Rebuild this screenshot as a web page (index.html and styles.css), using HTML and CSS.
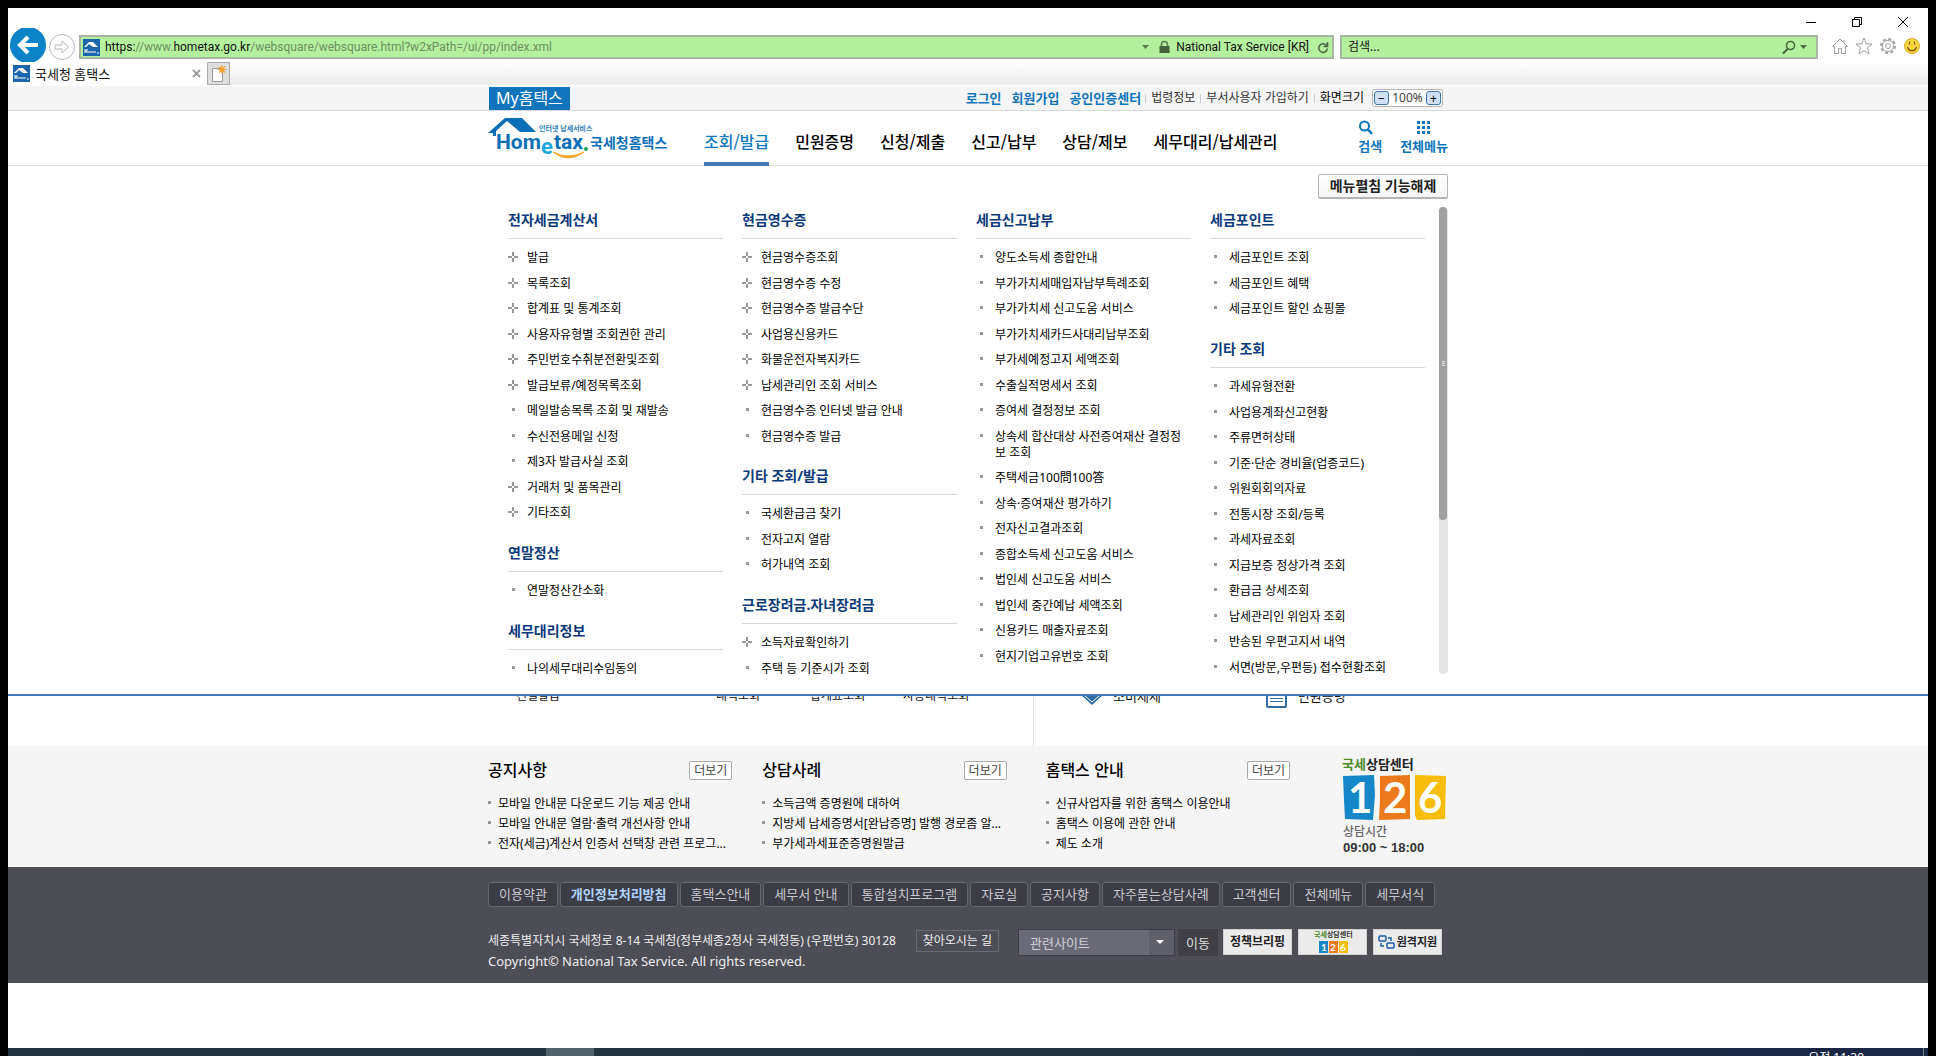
FILE: index.html
```html
<!DOCTYPE html>
<html lang="ko">
<head>
<meta charset="utf-8">
<title>국세청 홈택스</title>
<link rel="stylesheet" href="styles.css">
</head>
<body>
<div class="window">
  <div class="chrome">
    <div class="titlebar">
      <button class="winbtn" aria-label="최소화"><svg width="12" height="12" viewBox="0 0 12 12"><path d="M1 6.500H11" stroke="#000" fill="none"/></svg></button>
      <button class="winbtn" aria-label="이전 크기로"><svg width="12" height="12" viewBox="0 0 12 12"><path d="M1.500 3.500H8.500V10.500H1.500ZM3.500 3.500V1.500H10.500V8.500H8.500" stroke="#000" fill="none"/></svg></button>
      <button class="winbtn" aria-label="닫기"><svg width="12" height="12" viewBox="0 0 12 12"><path d="M1 1L11 11M11 1L1 11" stroke="#000" fill="none"/></svg></button>
    </div>
    <div class="addressrow">
      <button class="back" aria-label="뒤로"><svg width="38" height="36" viewBox="0 0 38 36"><circle cx="19" cy="18" r="18" fill="#0a84c6"/><path d="M29 18H12M19 10L11 18L19 26" fill="none" stroke="#fff" stroke-width="4"/></svg></button>
      <button class="forward" aria-label="앞으로"><svg width="28" height="28" viewBox="0 0 28 28"><circle cx="14" cy="14" r="12.500" fill="#fff" stroke="#b9b9b9"/><path d="M7 12H14V8L20.500 14L14 20V16H7Z" fill="none" stroke="#b5b5b5"/></svg></button>
      <div class="url">
        <svg class="favicon" width="17" height="17" viewBox="0 0 17 17"><rect width="17" height="17" fill="#1a65ab"/><path d="M1 8L6 3H10L15 8H10L6 5L3 8Z" fill="#fff"/><path d="M2 10V14M4 10V14M2 12H4M6 12V14M8 12V14M10 12V14M12 12V14M14 14H16" stroke="#fff" fill="none"/></svg>
        <p class="urltext"><b>https:</b>//www.<b>hometax.go.kr</b>/websquare/websquare.html?w2xPath=/ui/pp/index.xml</p>
        <svg width="7" height="4" viewBox="0 0 7 4"><path d="M0 0H7L3.500 4Z" fill="#5c7d52"/></svg>
        <svg class="lock" width="11" height="12" viewBox="0 0 11 12"><path d="M2.500 6V3.500A3 3 0 0 1 8.500 3.500V6" stroke="#5b7a50" stroke-width="1.500" fill="none"/><rect x="0.500" y="5" width="10" height="7" fill="#456339"/></svg>
        <span class="cert">National Tax Service [KR]</span>
        <svg width="12" height="13" viewBox="0 0 12 13"><path d="M9.500 4.500A4.300 4.300 0 1 0 10.300 7.500M10.500 1V5.500H6.500" stroke="#4f6b45" stroke-width="1.600" fill="none"/></svg>
      </div>
      <div class="finder">
        <input class="findinput" type="text" value="검색..." aria-label="검색">
        <svg width="14" height="15" viewBox="0 0 14 15"><circle cx="8.500" cy="5.500" r="4" stroke="#4a6b40" stroke-width="1.600" fill="none"/><path d="M6 8.500L1 13.500" stroke="#4a6b40" stroke-width="2.200"/></svg>
        <svg width="7" height="4" viewBox="0 0 7 4"><path d="M0 0H7L3.500 4Z" fill="#4f6b45"/></svg>
      </div>
      <div class="tools">
        <svg width="18" height="18" viewBox="0 0 18 18"><path d="M1.500 9.500L9 2L16.500 9.500H14.500V16.500H10.500V11.500H7.500V16.500H3.500V9.500ZM13 5.500V3" fill="none" stroke="#a0a0a0"/></svg>
        <svg width="18" height="18" viewBox="0 0 18 18"><path d="M9 1L11.200 6.800L17 7L12.500 10.800L14 17L9 13.500L4 17L5.500 10.800L1 7L6.800 6.800Z" fill="none" stroke="#a0a0a0"/></svg>
        <svg width="18" height="18" viewBox="0 0 18 18"><circle cx="9" cy="9" r="7" fill="none" stroke="#a0a0a0" stroke-width="2" stroke-dasharray="3 2.500"/><circle cx="9" cy="9" r="5.500" fill="#fff" stroke="#a0a0a0"/><circle cx="9" cy="9" r="2.500" fill="none" stroke="#a0a0a0"/></svg>
        <svg width="18" height="18" viewBox="0 0 18 18"><circle cx="9" cy="9" r="7.500" fill="#fcd73c" stroke="#d5ae2e"/><path d="M6.500 4.500V7.500M11.500 4.500V7.500M4.500 10A4.600 4.600 0 0 0 13.500 10" stroke="#7c5a10" stroke-width="1.300" fill="none"/></svg>
      </div>
    </div>
    <div class="tabrow">
      <div class="tab">
        <svg class="favicon" width="17" height="17" viewBox="0 0 17 17"><rect width="17" height="17" fill="#1a65ab"/><path d="M1 8L6 3H10L15 8H10L6 5L3 8Z" fill="#fff"/><path d="M2 10V14M4 10V14M2 12H4M6 12V14M8 12V14M10 12V14M12 12V14M14 14H16" stroke="#fff" fill="none"/></svg>
        <span class="tabname">국세청 홈택스</span>
        <svg width="9" height="9" viewBox="0 0 9 9"><path d="M1 1L8 8M8 1L1 8" stroke="#999" stroke-width="1.800"/></svg>
      </div>
      <button class="newtab" aria-label="새 탭"><svg width="18" height="18" viewBox="0 0 18 18"><path d="M3.500 3.500H13.500V16.500H3.500Z" fill="#fff" stroke="#999"/><path d="M13 0V9M8.500 4.500H17.500M10 1.500L16 7.500M16 1.500L10 7.500" stroke="#f2a02d" stroke-width="1.200"/></svg></button>
    </div>
  </div>

  <div class="utilbar">
    <div class="wrap utilrow">
      <a class="my" href="#">My홈택스</a>
      <div class="utils">
        <a class="strong" href="#">로그인</a>
        <a class="strong" href="#">회원가입</a>
        <a class="strong" href="#">공인인증센터</a>
        <a class="plain" href="#">법령정보</a>
        <a class="plain" href="#">부서사용자 가입하기</a>
        <span class="plain dark">화면크기</span>
        <div class="zoomer">
          <button class="zbtn" aria-label="축소">−</button><span>100%</span><button class="zbtn" aria-label="확대">+</button>
        </div>
      </div>
    </div>
  </div>

  <header class="header">
    <div class="wrap headrow">
      <a class="logo" href="#" aria-label="Hometax 국세청홈택스">
        <svg width="182" height="44" viewBox="0 0 182 44">
          <path d="M0 16L17 1H34L48 15H32L19 4L8 14V19H5V16Z" fill="#0b6fb8"/>
          <text x="8" y="32" class="lg-main">Hom</text>
          <text x="53" y="37" class="lg-e">e</text>
          <text x="66" y="32" class="lg-main">tax</text>
          <circle cx="98" cy="32" r="2" fill="#18a558"/>
          <path d="M65 35Q80 47 96 35Q80 43 65 35Z" fill="#f6a623" stroke="#f6a623"/>
          <text x="51" y="14" class="lg-small">인터넷 납세서비스</text>
          <text x="102" y="31" class="lg-name">국세청홈택스</text>
        </svg>
      </a>
      <nav class="gnb">
        <a class="on" href="#">조회/발급</a>
        <a href="#">민원증명</a>
        <a href="#">신청/제출</a>
        <a href="#">신고/납부</a>
        <a href="#">상담/제보</a>
        <a href="#">세무대리/납세관리</a>
      </nav>
      <div class="quick">
        <a href="#"><svg width="16" height="16" viewBox="0 0 16 16"><circle cx="6.500" cy="6" r="4.500" fill="none" stroke="#0f75bc" stroke-width="2"/><path d="M10 9.500L14 14" stroke="#0f75bc" stroke-width="2.500"/></svg>검색</a>
        <a href="#"><svg width="16" height="16" viewBox="0 0 16 16"><path d="M1 1h3v3h-3zM6 1h3v3h-3zM11 1h3v3h-3zM1 6h3v3h-3zM6 6h3v3h-3zM11 6h3v3h-3zM1 11h3v3h-3zM6 11h3v3h-3zM11 11h3v3h-3z" fill="#0f75bc"/></svg>전체메뉴</a>
      </div>
    </div>
  </header>

  <main class="main">
    <div class="wrap services">
      <div class="svc-left"><a href="#">건별발급</a><a href="#">내역조회</a><a href="#">합계표조회</a><a href="#">사용내역조회</a></div>
      <div class="svc-right">
        <a href="#"><svg width="24" height="24" viewBox="0 0 24 24"><path d="M1 11L12 21L23 11L18 4H6Z" fill="#2f6da3"/><path d="M5 12L12 18L19 12" stroke="#fff" fill="none"/></svg>소비제세</a>
        <a href="#"><svg width="24" height="24" viewBox="0 0 24 24"><rect x="2" y="1" width="19" height="22" rx="1" fill="#fff" stroke="#2f6da3" stroke-width="2"/><path d="M5 11.500H18M5 14.500H18M5 17.500H18" stroke="#2f6da3"/></svg>민원증명</a>
      </div>
    </div>

    <div class="mega">
      <div class="wrap">
        <div class="megatop"><button class="fold">메뉴펼침 기능해제</button></div>
        <div class="megabody">
          <div class="cols">
            <div class="col">
              <section><h2>전자세금계산서</h2>
                <ul class="menu">
                  <li class="more"><a href="#">발급</a></li>
                  <li class="more"><a href="#">목록조회</a></li>
                  <li class="more"><a href="#">합계표 및 통계조회</a></li>
                  <li class="more"><a href="#">사용자유형별 조회권한 관리</a></li>
                  <li class="more"><a href="#">주민번호수취분전환및조회</a></li>
                  <li class="more"><a href="#">발급보류/예정목록조회</a></li>
                  <li><a href="#">메일발송목록 조회 및 재발송</a></li>
                  <li><a href="#">수신전용메일 신청</a></li>
                  <li><a href="#">제3자 발급사실 조회</a></li>
                  <li class="more"><a href="#">거래처 및 품목관리</a></li>
                  <li class="more"><a href="#">기타조회</a></li>
                </ul></section>
              <section><h2>연말정산</h2>
                <ul class="menu"><li><a href="#">연말정산간소화</a></li></ul></section>
              <section><h2>세무대리정보</h2>
                <ul class="menu"><li><a href="#">나의세무대리수임동의</a></li></ul></section>
            </div>
            <div class="col">
              <section><h2>현금영수증</h2>
                <ul class="menu">
                  <li class="more"><a href="#">현금영수증조회</a></li>
                  <li class="more"><a href="#">현금영수증 수정</a></li>
                  <li class="more"><a href="#">현금영수증 발급수단</a></li>
                  <li class="more"><a href="#">사업용신용카드</a></li>
                  <li class="more"><a href="#">화물운전자복지카드</a></li>
                  <li class="more"><a href="#">납세관리인 조회 서비스</a></li>
                  <li><a href="#">현금영수증 인터넷 발급 안내</a></li>
                  <li><a href="#">현금영수증 발급</a></li>
                </ul></section>
              <section><h2>기타 조회/발급</h2>
                <ul class="menu">
                  <li><a href="#">국세환급금 찾기</a></li>
                  <li><a href="#">전자고지 열람</a></li>
                  <li><a href="#">허가내역 조회</a></li>
                </ul></section>
              <section><h2>근로장려금.자녀장려금</h2>
                <ul class="menu">
                  <li class="more"><a href="#">소득자료확인하기</a></li>
                  <li><a href="#">주택 등 기준시가 조회</a></li>
                </ul></section>
            </div>
            <div class="col">
              <section><h2>세금신고납부</h2>
                <ul class="menu">
                  <li><a href="#">양도소득세 종합안내</a></li>
                  <li><a href="#">부가가치세매입자납부특례조회</a></li>
                  <li><a href="#">부가가치세 신고도움 서비스</a></li>
                  <li><a href="#">부가가치세카드사대리납부조회</a></li>
                  <li><a href="#">부가세예정고지 세액조회</a></li>
                  <li><a href="#">수출실적명세서 조회</a></li>
                  <li><a href="#">증여세 결정정보 조회</a></li>
                  <li><a href="#">상속세 합산대상 사전증여재산 결정정보 조회</a></li>
                  <li><a href="#">주택세금100問100答</a></li>
                  <li><a href="#">상속·증여재산 평가하기</a></li>
                  <li><a href="#">전자신고결과조회</a></li>
                  <li><a href="#">종합소득세 신고도움 서비스</a></li>
                  <li><a href="#">법인세 신고도움 서비스</a></li>
                  <li><a href="#">법인세 중간예납 세액조회</a></li>
                  <li><a href="#">신용카드 매출자료조회</a></li>
                  <li><a href="#">현지기업고유번호 조회</a></li>
                </ul></section>
            </div>
            <div class="col">
              <section><h2>세금포인트</h2>
                <ul class="menu">
                  <li><a href="#">세금포인트 조회</a></li>
                  <li><a href="#">세금포인트 혜택</a></li>
                  <li><a href="#">세금포인트 할인 쇼핑몰</a></li>
                </ul></section>
              <section><h2>기타 조회</h2>
                <ul class="menu">
                  <li><a href="#">과세유형전환</a></li>
                  <li><a href="#">사업용계좌신고현황</a></li>
                  <li><a href="#">주류면허상태</a></li>
                  <li><a href="#">기준·단순 경비율(업종코드)</a></li>
                  <li><a href="#">위원회회의자료</a></li>
                  <li><a href="#">전통시장 조회/등록</a></li>
                  <li><a href="#">과세자료조회</a></li>
                  <li><a href="#">지급보증 정상가격 조회</a></li>
                  <li><a href="#">환급금 상세조회</a></li>
                  <li><a href="#">납세관리인 위임자 조회</a></li>
                  <li><a href="#">반송된 우편고지서 내역</a></li>
                  <li><a href="#">서면(방문,우편등) 접수현황조회</a></li>
                </ul></section>
            </div>
          </div>
          <div class="track"><div class="thumb"><i></i><i></i><i></i></div></div>
        </div>
      </div>
    </div>
  </main>

  <section class="info">
    <div class="wrap inforow">
      <div class="board">
        <div class="boardhead"><h3>공지사항</h3><a class="morebtn" href="#">더보기</a></div>
        <ul><li><a href="#">모바일 안내문 다운로드 기능 제공 안내</a></li><li><a href="#">모바일 안내문 열람·출력 개선사항 안내</a></li><li><a href="#">전자(세금)계산서 인증서 선택창 관련 프로그...</a></li></ul>
      </div>
      <div class="board">
        <div class="boardhead"><h3>상담사례</h3><a class="morebtn" href="#">더보기</a></div>
        <ul><li><a href="#">소득금액 증명원에 대하여</a></li><li><a href="#">지방세 납세증명서[완납증명] 발행 경로좀 알...</a></li><li><a href="#">부가세과세표준증명원발급</a></li></ul>
      </div>
      <div class="board">
        <div class="boardhead"><h3>홈택스 안내</h3><a class="morebtn" href="#">더보기</a></div>
        <ul><li><a href="#">신규사업자를 위한 홈택스 이용안내</a></li><li><a href="#">홈택스 이용에 관한 안내</a></li><li><a href="#">제도 소개</a></li></ul>
      </div>
      <div class="call">
        <svg width="106" height="66" viewBox="0 0 106 66" role="img" aria-label="국세상담센터 126">
          <text x="0" y="12" class="hand"><tspan fill="#4e8a2c">국세</tspan><tspan fill="#222">상담센터</tspan></text>
          <path d="M1 19L32 18L33 38L31 63L3 62L2 43Z" fill="#1587c9"/>
          <path d="M38 19L68 18V62L37 63L38 43Z" fill="#ec7a1c"/>
          <path d="M73 18L104 19L103 62L75 63L73 58Z" fill="#f6bd0a"/>
          <text x="6" y="56" class="num">1</text><text x="41" y="56" class="num">2</text><text x="76" y="56" class="num">6</text>
        </svg>
        <p class="calltime">상담시간</p>
        <p class="hours">09:00 ~ 18:00</p>
      </div>
    </div>
  </section>

  <footer class="footer">
    <div class="wrap">
      <nav class="fnav">
        <a href="#">이용약관</a><a class="hl" href="#">개인정보처리방침</a><a href="#">홈택스안내</a><a href="#">세무서 안내</a><a href="#">통합설치프로그램</a><a href="#">자료실</a><a href="#">공지사항</a><a href="#">자주묻는상담사례</a><a href="#">고객센터</a><a href="#">전체메뉴</a><a href="#">세무서식</a>
      </nav>
      <div class="fbody">
        <div class="addr">
          <div class="addrline"><span>세종특별자치시 국세청로 8-14 국세청(정부세종2청사 국세청동) (우편번호) 30128</span><a href="#">찾아오시는 길</a></div>
          <p>Copyright© National Tax Service. All rights reserved.</p>
        </div>
        <div class="sites">
          <div class="selbox"><select aria-label="관련사이트"><option>관련사이트</option></select></div>
          <button class="go">이동</button>
          <a class="banner brief" href="#">정책브리핑</a>
          <a class="banner" href="#" aria-label="국세상담센터 126"><svg width="38" height="24" viewBox="0 0 38 24">
            <text x="0" y="7" class="hand-s"><tspan fill="#4e8a2c">국세</tspan><tspan fill="#333">상담센터</tspan></text>
            <rect x="5" y="11" width="9" height="12" fill="#1587c9"/><rect x="15" y="11" width="9" height="12" fill="#ec7a1c"/><rect x="25" y="11" width="9" height="12" fill="#f6bd0a"/>
            <text x="7" y="21" class="num-s">1</text><text x="16" y="21" class="num-s">2</text><text x="26" y="21" class="num-s">6</text></svg></a>
          <a class="banner" href="#"><svg width="17" height="16" viewBox="0 0 17 16"><g fill="none" stroke="#1b5cab" stroke-width="1.500"><rect x="1" y="2" width="7" height="5" rx="1"/><rect x="9" y="9" width="7" height="5" rx="1"/><path d="M10 4H13V7M3 9V12H6"/></g></svg>원격지원</a>
        </div>
      </div>
    </div>
  </footer>

  <div class="blank"></div>
  <div class="taskbar"><span class="task"></span><span class="clock">오전 11:30</span></div>
</div>
</body>
</html>
```

FILE: styles.css
```css
* { box-sizing: border-box; }
html, body { height: 100%; }
body {
  margin: 0;
  background: #000;
  color: #111;
  font-family: "Noto Sans", "Noto Sans CJK KR", sans-serif;
  font-size: 12px;
  line-height: 16px;
  overflow: hidden;
}
a { color: inherit; text-decoration: none; }
button, input, select { font: inherit; color: inherit; margin: 0; padding: 0; border: 0; background: none; }
h2, h3, p, ul { margin: 0; padding: 0; }
ul { list-style: none; }
svg { display: block; flex: none; overflow: visible; }

.window { display: flex; flex-direction: column; height: 100vh; padding: 8px 8px 0; }
.window > * { flex: none; }
.wrap { width: 960px; margin: 0 auto; }

/* browser frame */
.chrome { background: #fff; }
.titlebar { display: flex; justify-content: flex-end; gap: 34px; height: 20px; padding: 8px 19px 0 0; }
.winbtn { height: 12px; }
.addressrow { display: flex; align-items: center; height: 34px; padding: 0 7px 0 1px; overflow: hidden; }
.back { height: 36px; }
.forward { margin: 4px 3px 0 1px; }
.url, .finder { display: flex; align-items: center; height: 24px; margin-top: 4px; background: #b4f19e; border: 2px solid #a9b5a5; }
.url { flex: 1; gap: 8px; padding: 0 3px 0 2px; font-family: Roboto, "Noto Sans CJK KR", sans-serif; }
.favicon { margin-right: -3px; }
.urltext { flex: 1; color: #6d8f62; }
.urltext b { font-weight: 400; color: #111; }
.lock { margin-left: 2px; }
.cert { margin-left: -2px; }
.finder { width: 478px; margin-left: 6px; padding: 0 9px 0 6px; gap: 4px; }
.findinput { flex: 1; min-width: 0; }
.tools { display: flex; gap: 6px; margin: 2px 0 0 13px; }
.tabrow { display: flex; height: 24px; background: linear-gradient(#fff, #ececec); border-bottom: 1px solid #fff; }
.tab { display: flex; align-items: center; width: 200px; padding: 0 6px 0 5px; gap: 8px; background: #fff; border-right: 1px solid #aaa; }
.tabname { flex: 1; font-size: 13px; }
.newtab { display: flex; align-items: center; width: 22px; padding-left: 1px; background: #dedede; border: 1px solid #aaa; border-left: 0; }

/* utility links */
.utilbar { background: #f5f5f5; border-bottom: 1px solid #d9d9d9; }
.utilrow { display: flex; justify-content: space-between; height: 24px; padding: 0 5px 0 1px; }
.my { margin-top: 1px; padding: 0 7px; background: #1075bc; color: #fff; font-size: 16px; line-height: 22px; }
.utils { display: flex; align-items: center; height: 20px; margin-top: 2px; }
.strong { margin-right: 10px; color: #0f75bc; font-size: 13px; font-weight: 700; }
.plain { position: relative; margin-right: 11px; color: #333; }
.plain::before { content: ""; position: absolute; left: -6px; top: 4px; width: 1px; height: 9px; background: #ccc; }
.plain.dark { color: #000; margin-right: 8px; }
.zoomer { display: flex; justify-content: space-between; align-items: center; width: 71px; height: 18px; padding: 0 1px; background: #fff; border: 1px solid #b5b5b5; border-radius: 3px; color: #444; }
.zbtn { width: 15px; height: 14px; border: 1px solid #3d73b0; border-radius: 3px; background: #cfe0f4; color: #000; font-size: 12px; line-height: 11px; }

/* header */
.header { background: #fff; border-bottom: 1px solid #e1e1e1; }
.headrow { display: flex; height: 54px; }
.logo { width: 216px; padding-top: 6px; }
.lg-main { font: 700 21px Roboto, sans-serif; fill: #0b6fb8; }
.lg-e { font: 700 22px Roboto, sans-serif; fill: #1fa7e0; }
.lg-small { font: 700 7px "Noto Sans CJK KR", sans-serif; fill: #2b7fbd; }
.lg-name { font: 700 14px "Noto Sans CJK KR", sans-serif; fill: #0b6fb8; }
.gnb { display: flex; gap: 26px; flex: 1; }
.gnb a { padding-top: 18px; color: #000; font-size: 16px; line-height: 24px; font-weight: 500; font-family: "Noto Sans CJK KR", sans-serif; white-space: nowrap; }
.gnb .on { color: #1278be; border-bottom: 4px solid #457ab8; margin-bottom: -1px; z-index: 1; }
.quick { display: flex; gap: 18px; color: #0f75bc; font-size: 13px; font-weight: 700; }
.quick a { display: flex; flex-direction: column; align-items: center; gap: 2px; padding-top: 9px; }
.quick a:first-child { align-items: flex-start; }

/* main area with the unfolded menu over it */
.main { position: relative; background: #fff; }
.services { display: flex; height: 580px; padding-top: 518px; }
.svc-left { display: flex; width: 546px; padding: 4px 0 0 28px; border-right: 1px solid #ddd; }
.svc-left a:nth-child(1) { width: 200px; }
.svc-left a:nth-child(2) { width: 94px; }
.svc-left a:nth-child(3) { width: 93px; }
.svc-right { display: flex; gap: 104px; padding-left: 46px; font-size: 13px; }
.svc-right a { display: flex; align-items: center; gap: 9px; height: 24px; }
.mega { position: absolute; inset: 0 0 auto; height: 530px; background: #fff; border-bottom: 2px solid #457ab8; }
.megatop { display: flex; justify-content: flex-end; padding: 8px 0; }
.fold { width: 130px; height: 25px; border: 1px solid #b5b5b5; border-bottom-width: 2px; border-radius: 2px; background: linear-gradient(#fff, #f6f6f6); color: #222; font-size: 14px; font-weight: 700; line-height: 20px; }
.megabody { display: flex; justify-content: space-between; padding-left: 20px; }
.cols { display: grid; grid-template-columns: repeat(4, 215px); column-gap: 19px; margin-top: -6px; }
.col h2 { height: 38px; border-bottom: 1px solid #d9d9d9; color: #0b3a7a; font-size: 14px; line-height: 37px; font-weight: 700; }
.menu { padding: 6px 0 8px; }
.menu li { position: relative; padding: 5px 0 5px 19px; color: #000; }
.menu li:nth-child(even) { padding-bottom: 4px; }
.menu li::before { content: ""; position: absolute; left: 4px; top: 10px; width: 3px; height: 3px; background: #999; }
.menu .more::before {
  left: 0; top: 7px; width: 10px; height: 10px;
  background:
    linear-gradient(#999, #999) 4px 0 / 2px 4px no-repeat,
    linear-gradient(#999, #999) 4px 6px / 2px 4px no-repeat,
    linear-gradient(#999, #999) 0 4px / 4px 2px no-repeat,
    linear-gradient(#999, #999) 6px 4px / 4px 2px no-repeat;
}
.track { width: 9px; height: 467px; background: #e5e5e5; border-radius: 4px; }
.thumb { display: flex; flex-direction: column; align-items: center; justify-content: center; gap: 1px; width: 8px; height: 313px; background: #a0a0a0; border-radius: 4px; }
.thumb i { width: 3px; height: 1px; background: #e5e5e5; }

/* boards */
.info { background: #f5f5f5; }
.inforow { display: flex; height: 121px; padding-top: 11px; }
.board { width: 245px; margin-right: 30px; }
.board + .board + .board { margin-left: 9px; margin-right: 52px; }
.boardhead { display: flex; justify-content: space-between; height: 24px; margin-bottom: 13px; }
.boardhead h3 { color: #000; font-size: 16px; line-height: 24px; font-weight: 500; font-family: "Noto Sans CJK KR", sans-serif; }
.morebtn { width: 43px; height: 19px; margin-top: 4px; border: 1px solid #aaa; border-radius: 2px; background: #fff; color: #444; line-height: 17px; text-align: center; }
.board li { position: relative; padding-left: 10px; line-height: 20px; white-space: nowrap; color: #000; }
.board li::before { content: ""; position: absolute; left: 0; top: 7px; width: 3px; height: 3px; background: #999; }
.hand { font: 700 13px "Noto Sans CJK KR", sans-serif; }
.num { font: 700 42px Lato, sans-serif; fill: #fff; }
.calltime { margin-top: 1px; padding-left: 1px; color: #666; font-weight: 500; }
.hours { padding-left: 1px; color: #333; font: 700 13px/16px "Liberation Sans", sans-serif; }

/* footer */
.footer { background: #4d4d55; color: #eee; }
.footer .wrap { height: 116px; padding-top: 15px; }
.fnav { display: flex; gap: 2px; }
.fnav a { padding: 0 10px; border: 1px solid #66666f; border-radius: 3px; background: #3c3c44; color: #c8c8ce; font-size: 13px; line-height: 23px; }
.fnav .hl { color: #aed4ff; font-weight: 700; }
.fbody { display: flex; justify-content: space-between; padding: 22px 6px 0 0; }
.addr { width: 511px; }
.addr p { font-size: 13px; }
.addrline { display: flex; justify-content: space-between; align-items: center; height: 24px; }
.addrline a { padding: 0 6px; border: 1px solid #6a6a73; line-height: 20px; }
.sites { display: flex; }
.selbox { position: relative; width: 157px; height: 27px; margin-right: 3px; }
.selbox select { width: 157px; height: 27px; padding-left: 11px; border: 1px solid #3d3d43; border-radius: 0; background: linear-gradient(90deg, #6a6a77 130px, #5f5f6b 130px); color: #d0d0d6; font-size: 13px; appearance: none; }
.selbox::after { content: ""; position: absolute; right: 11px; top: 11px; border: 4px solid transparent; border-top-color: #fff; border-bottom: 0; pointer-events: none; }
.go { width: 40px; height: 27px; margin-right: 5px; background: #3f3f45; color: #ddd; font-size: 13px; }
.banner { display: flex; align-items: center; justify-content: center; gap: 2px; width: 69px; height: 26px; margin-right: 6px; background: #ebebeb; border: 1px solid #d0d0d0; color: #222; font-weight: 700; }
.banner:last-child { margin-right: 0; font-size: 11px; }
.hand-s { font: 700 7px "Noto Sans CJK KR", sans-serif; }
.num-s { font: 700 10px Lato, sans-serif; fill: #fff; }

.window > .blank { flex: 1 0 0; background: #fff; }
.taskbar { position: relative; display: flex; justify-content: space-between; height: 8px; padding: 0 64px 0 538px; overflow: hidden; background: linear-gradient(90deg, #21363e 60%, #1a2744 90%); }
.taskbar::after { content: ""; position: absolute; right: 4px; top: 0; width: 1px; height: 100%; background: #76808f; }
.task { width: 48px; background: #50626a; }
.clock { padding-top: 2px; color: #fff; }
```
